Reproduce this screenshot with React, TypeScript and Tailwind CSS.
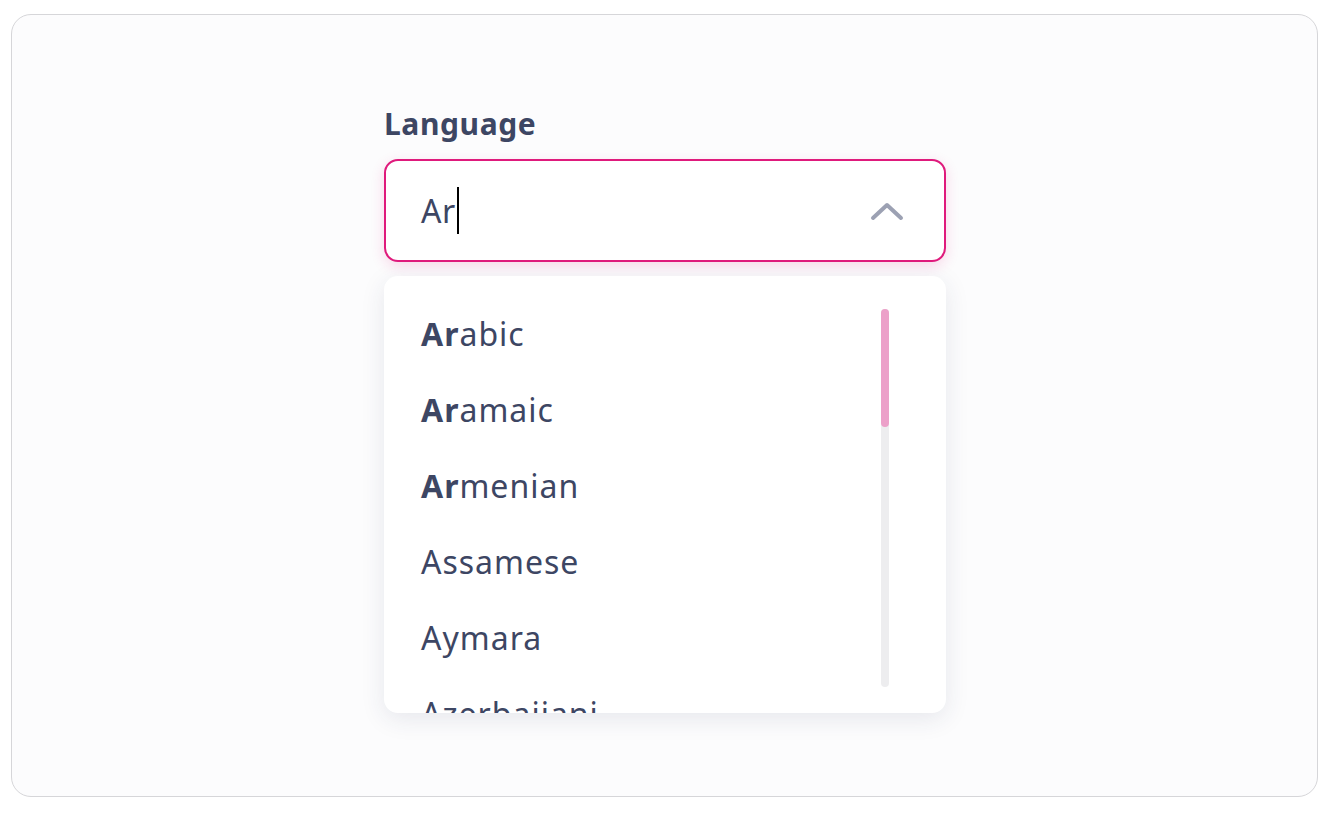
import React from 'react';

const languages = ['Arabic', 'Aramaic', 'Armenian', 'Assamese', 'Aymara', 'Azerbaijani'];

const query = 'Ar';

// bold the part of the name that matches what was typed
const Highlight = ({ name }: { name: string }) => {
  if (name.toLowerCase().startsWith(query.toLowerCase())) {
    return (
      <>
        <span className="font-bold">{name.slice(0, query.length)}</span>
        {name.slice(query.length)}
      </>
    );
  }
  return <>{name}</>;
};

export default function App() {
  return (
    <div className="w-[1328px] h-[814px] bg-white pt-[14px] pl-[11px] pr-[10px] pb-[17px] font-['Noto_Sans',sans-serif]">
      <div className="h-full rounded-[20px] border border-[#d6d6d9] bg-[#fcfcfd] flex justify-center">
        <div className="w-[562px] pt-[89px] ml-[1px]">
          {/* Label */}
          <label className="block text-[30px] leading-[40px] font-bold text-[#3d4663] tracking-[0.6px] mb-[15px]">
            Language
          </label>

          {/* Combobox input */}
          <div className="h-[103px] rounded-[14px] border-2 border-[#df1a7c] bg-white shadow-[0_4px_14px_rgba(223,26,124,0.16)] flex items-center pl-[35px] pr-[40px]">
            <div className="flex-1 flex items-center text-[32px] text-[#3d4663] tracking-[0.6px]">
              <span>{query}</span>
              <span className="w-[2px] h-[47px] bg-black ml-[1px]" />
            </div>
            <svg width="34" height="20" viewBox="0 0 34 20" fill="none">
              <path d="M3 17L17 4L31 17" stroke="#9ca1b3" strokeWidth="4" strokeLinecap="round" strokeLinejoin="round" />
            </svg>
          </div>

          {/* Options list */}
          <div className="relative mt-[14px] h-[437px] rounded-[14px] bg-white shadow-[0_6px_24px_rgba(40,50,90,0.10)] overflow-hidden">
            <ul className="pt-[20px] pl-[37px]">
              {languages.map((lang) => (
                <li key={lang} className="h-[76px] flex items-center text-[32px] text-[#3d4663] tracking-[1px]">
                  <Highlight name={lang} />
                </li>
              ))}
            </ul>

            {/* Scrollbar */}
            <div className="absolute top-[33px] right-[57px] w-[8px] h-[378px] rounded-full bg-[#ededef]">
              <div className="w-full h-[118px] rounded-full bg-[#eca0c9]" />
            </div>
          </div>
        </div>
      </div>
    </div>
  );
}
